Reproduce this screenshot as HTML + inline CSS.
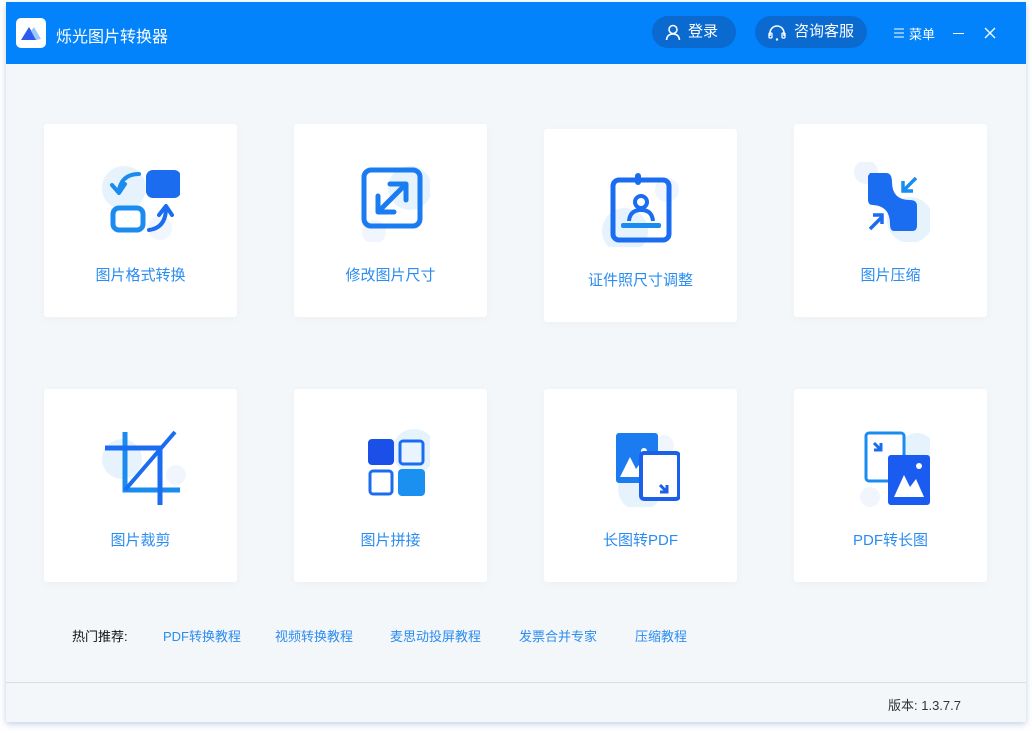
<!DOCTYPE html>
<html><head><meta charset="utf-8"><style>
*{margin:0;padding:0;box-sizing:border-box}
body{width:1032px;height:733px;background:#fff;font-family:"Liberation Sans","Noto Sans CJK SC",sans-serif;position:relative;overflow:hidden}
.win{position:absolute;left:6px;top:2px;width:1020px;height:720px;background:#f4f7f9;box-shadow:0 2px 6px rgba(120,150,200,.45)}
.hd{position:absolute;left:0;top:0;width:1020px;height:62px;background:#0283fc;color:#fff}
.logo{position:absolute;left:10px;top:16px;width:30px;height:30px;background:#fff;border-radius:5px}
.title{position:absolute;left:50px;top:21px;font-size:16px}
.pill{position:absolute;top:14px;height:32px;border-radius:16px;background:#0a6ad0;font-size:15px;line-height:32px;color:#fff}
.card{position:absolute;width:193px;height:193px;background:#fff;border-radius:3px;box-shadow:0 2px 10px rgba(0,0,0,.03)}
.card .t{position:absolute;left:0;right:0;top:140px;text-align:center;color:#2b8cf0;font-size:15px}
.card svg{position:absolute;left:56px;top:38px}
.rec{position:absolute;top:624px;font-size:13px;color:#2b8cf0}
</style></head><body>
<div class="win">
<div class="hd">
<div class="logo"><svg width="30" height="30"><path d="M5 22 L13 9 L21 22Z" fill="#2b5cf0"/><path d="M15 13 L18 9 L25 21 L20 22Z" fill="#9cc8fb"/></svg></div>
<div class="title">烁光图片转换器</div>
<div class="pill" style="left:646px;width:84px"><svg style="position:absolute;left:13px;top:8px" width="16" height="17"><circle cx="8" cy="5.5" r="4" fill="none" stroke="#fff" stroke-width="1.5"/><path d="M1.5 16 Q2 10 8 10 Q14 10 14.5 16" fill="none" stroke="#fff" stroke-width="1.5"/></svg><span style="position:absolute;left:36px">登录</span></div>
<div class="pill" style="left:749px;width:112px"><svg style="position:absolute;left:13px;top:8px" width="18" height="17"><path d="M2 12 V9 A7 7 0 0 1 16 9 V12" fill="none" stroke="#fff" stroke-width="1.5"/><rect x="1" y="9" width="3" height="5" rx="1" fill="none" stroke="#fff" stroke-width="1.3"/><rect x="14" y="9" width="3" height="5" rx="1" fill="none" stroke="#fff" stroke-width="1.3"/><circle cx="9" cy="15.5" r="1.2" fill="#fff"/></svg><span style="position:absolute;left:39px">咨询客服</span></div>
<svg style="position:absolute;left:888px;top:26px" width="11" height="10"><path d="M0 1H10M0 5H10M0 9H10" stroke="#fff" stroke-width="1.1"/></svg>
<div style="position:absolute;left:903px;top:22px;font-size:13px;white-space:nowrap">菜单</div>
<div style="position:absolute;left:947px;top:31px;width:11px;height:1px;background:#fff"></div>
<svg style="position:absolute;left:978px;top:25px" width="12" height="12"><path d="M1 1L11 11M11 1L1 11" stroke="#fff" stroke-width="1.3"/></svg>
</div>

<div class="card" style="left:38px;top:122px"><svg width="80" height="80"><circle cx="24" cy="26" r="22" fill="#e6f3fd"/><circle cx="60" cy="66" r="12" fill="#f0f5fe"/><path d="M39 12 Q22 12 19 28" fill="none" stroke="#1a8cf0" stroke-width="4" stroke-linecap="round"/><path d="M12 23 L19 31 L25 22" fill="none" stroke="#1a8cf0" stroke-width="4" stroke-linecap="round" stroke-linejoin="round"/><rect x="46" y="8" width="35" height="28" rx="7" fill="#1c6cf0"/><rect x="13" y="46" width="30" height="22" rx="6" fill="none" stroke="#1a8cf0" stroke-width="5"/><path d="M49 68 Q65 66 66 48" fill="none" stroke="#1c6cf0" stroke-width="4" stroke-linecap="round"/><path d="M59 53 L66 44 L72 53" fill="none" stroke="#1c6cf0" stroke-width="4" stroke-linecap="round" stroke-linejoin="round"/></svg><div class="t">图片格式转换</div></div>

<div class="card" style="left:288px;top:122px"><svg width="80" height="80"><circle cx="60" cy="26" r="22" fill="#e6f3fd"/><circle cx="24" cy="70" r="12" fill="#f0f5fe"/><rect x="14" y="8" width="56" height="56" rx="7" fill="none" stroke="#1a7cf0" stroke-width="5"/><path d="M28 50 L56 22 M40 22 H56 V38 M28 34 V50 H44" fill="none" stroke="#1a7cf0" stroke-width="5" stroke-linecap="round" stroke-linejoin="round"/></svg><div class="t">修改图片尺寸</div></div>

<div class="card" style="left:538px;top:127px"><svg width="80" height="80"><circle cx="25" cy="64" r="23" fill="#e6f3fd"/><circle cx="67" cy="23" r="12" fill="#f0f5fe"/><rect x="13" y="13" width="56" height="60" rx="6" fill="none" stroke="#1a6cf0" stroke-width="5"/><rect x="35" y="6" width="6" height="12" rx="3" fill="#1a6cf0"/><circle cx="41" cy="35" r="6" fill="none" stroke="#1a6cf0" stroke-width="4"/><path d="M29 54 Q30 43 41 43 Q52 43 53 54" fill="none" stroke="#1a6cf0" stroke-width="4"/><rect x="21" y="56" width="40" height="5" rx="2" fill="#1a8cf0"/></svg><div class="t">证件照尺寸调整</div></div>

<div class="card" style="left:788px;top:122px"><svg width="80" height="80"><circle cx="16" cy="10" r="12" fill="#eef3fd"/><circle cx="60" cy="58" r="23" fill="#e6f3fd"/><path d="M20 11 H36 Q42 11 42 20 Q42 38 60 38 Q67 38 67 44 V64 Q67 69 62 69 H44 Q40 69 40 62 Q40 44 23 43 Q18 43 18 38 V14Z" fill="#1a6cf0"/><path d="M66 16 L53 29 M53 19 V29 H63" fill="none" stroke="#1a8cf0" stroke-width="3.5"/><path d="M20 67 L32 55 M23 53 H32 V62" fill="none" stroke="#1a6cf0" stroke-width="3.5"/></svg><div class="t">图片压缩</div></div>

<div class="card" style="left:38px;top:387px"><svg width="90" height="80"><circle cx="22" cy="32" r="20" fill="#e6f3fd"/><circle cx="76" cy="48" r="10" fill="#f0f5fe"/><path d="M25 5 V63 H80" fill="none" stroke="#1a8cf0" stroke-width="5"/><path d="M5 21 H60 V78" fill="none" stroke="#1a6cf0" stroke-width="5"/><path d="M75 5 L25 63" stroke="#1a6cf0" stroke-width="4"/></svg><div class="t">图片裁剪</div></div>

<div class="card" style="left:288px;top:387px"><svg width="80" height="80"><ellipse cx="64" cy="24" rx="22" ry="22" fill="#e6f3fd"/><rect x="18" y="12" width="26" height="26" rx="4" fill="#1a50e8"/><rect x="50" y="14" width="23" height="23" rx="3" fill="#eaf4fe" stroke="#1a6cf0" stroke-width="3"/><rect x="20" y="44" width="22" height="23" rx="3" fill="none" stroke="#1a6cf0" stroke-width="3"/><rect x="48" y="42" width="27" height="27" rx="4" fill="#1a90f0"/></svg><div class="t">图片拼接</div></div>

<div class="card" style="left:538px;top:387px"><svg width="80" height="80"><circle cx="40" cy="62" r="22" fill="#e6f3fd"/><circle cx="64" cy="18" r="10" fill="#f0f5fe"/><rect x="16" y="6" width="42" height="50" rx="3" fill="#1a7cf0"/><path d="M20 50 L30 30 L36 42 L42 34 L50 50Z" fill="#fff"/><circle cx="44" cy="24" r="3" fill="#fff"/><rect x="41" y="26" width="38" height="46" rx="3" fill="#fff" stroke="#1a60e8" stroke-width="4"/><path d="M60 58 L67 65 M67 58 V65 H60" stroke="#1a60e8" stroke-width="3" fill="none"/></svg><div class="t">长图转PDF</div></div>

<div class="card" style="left:788px;top:387px"><svg width="80" height="80"><ellipse cx="67" cy="36" rx="22" ry="30" fill="#e6f3fd"/><circle cx="20" cy="70" r="10" fill="#f0f5fe"/><rect x="16" y="6" width="38" height="48" rx="3" fill="#fff" stroke="#1a8cf0" stroke-width="3"/><path d="M24 16 L31 23 M31 16 V23 H24" stroke="#1a6cf0" stroke-width="3" fill="none"/><rect x="38" y="28" width="42" height="50" rx="3" fill="#1a5cf0"/><path d="M44 70 L54 48 L60 60 L66 52 L74 70Z" fill="#fff"/><circle cx="69" cy="39" r="3" fill="#fff"/></svg><div class="t">PDF转长图</div></div>

<div class="rec" style="left:66px;color:#111">热门推荐:</div>
<div class="rec" style="left:157px">PDF转换教程</div>
<div class="rec" style="left:269px">视频转换教程</div>
<div class="rec" style="left:384px">麦思动投屏教程</div>
<div class="rec" style="left:513px">发票合并专家</div>
<div class="rec" style="left:629px">压缩教程</div>
<div style="position:absolute;left:0;top:680px;width:1020px;height:1px;background:#dcdee2"></div>
<div style="position:absolute;left:882px;top:693px;font-size:13px;color:#333">版本: 1.3.7.7</div>
</div>
</body></html>
